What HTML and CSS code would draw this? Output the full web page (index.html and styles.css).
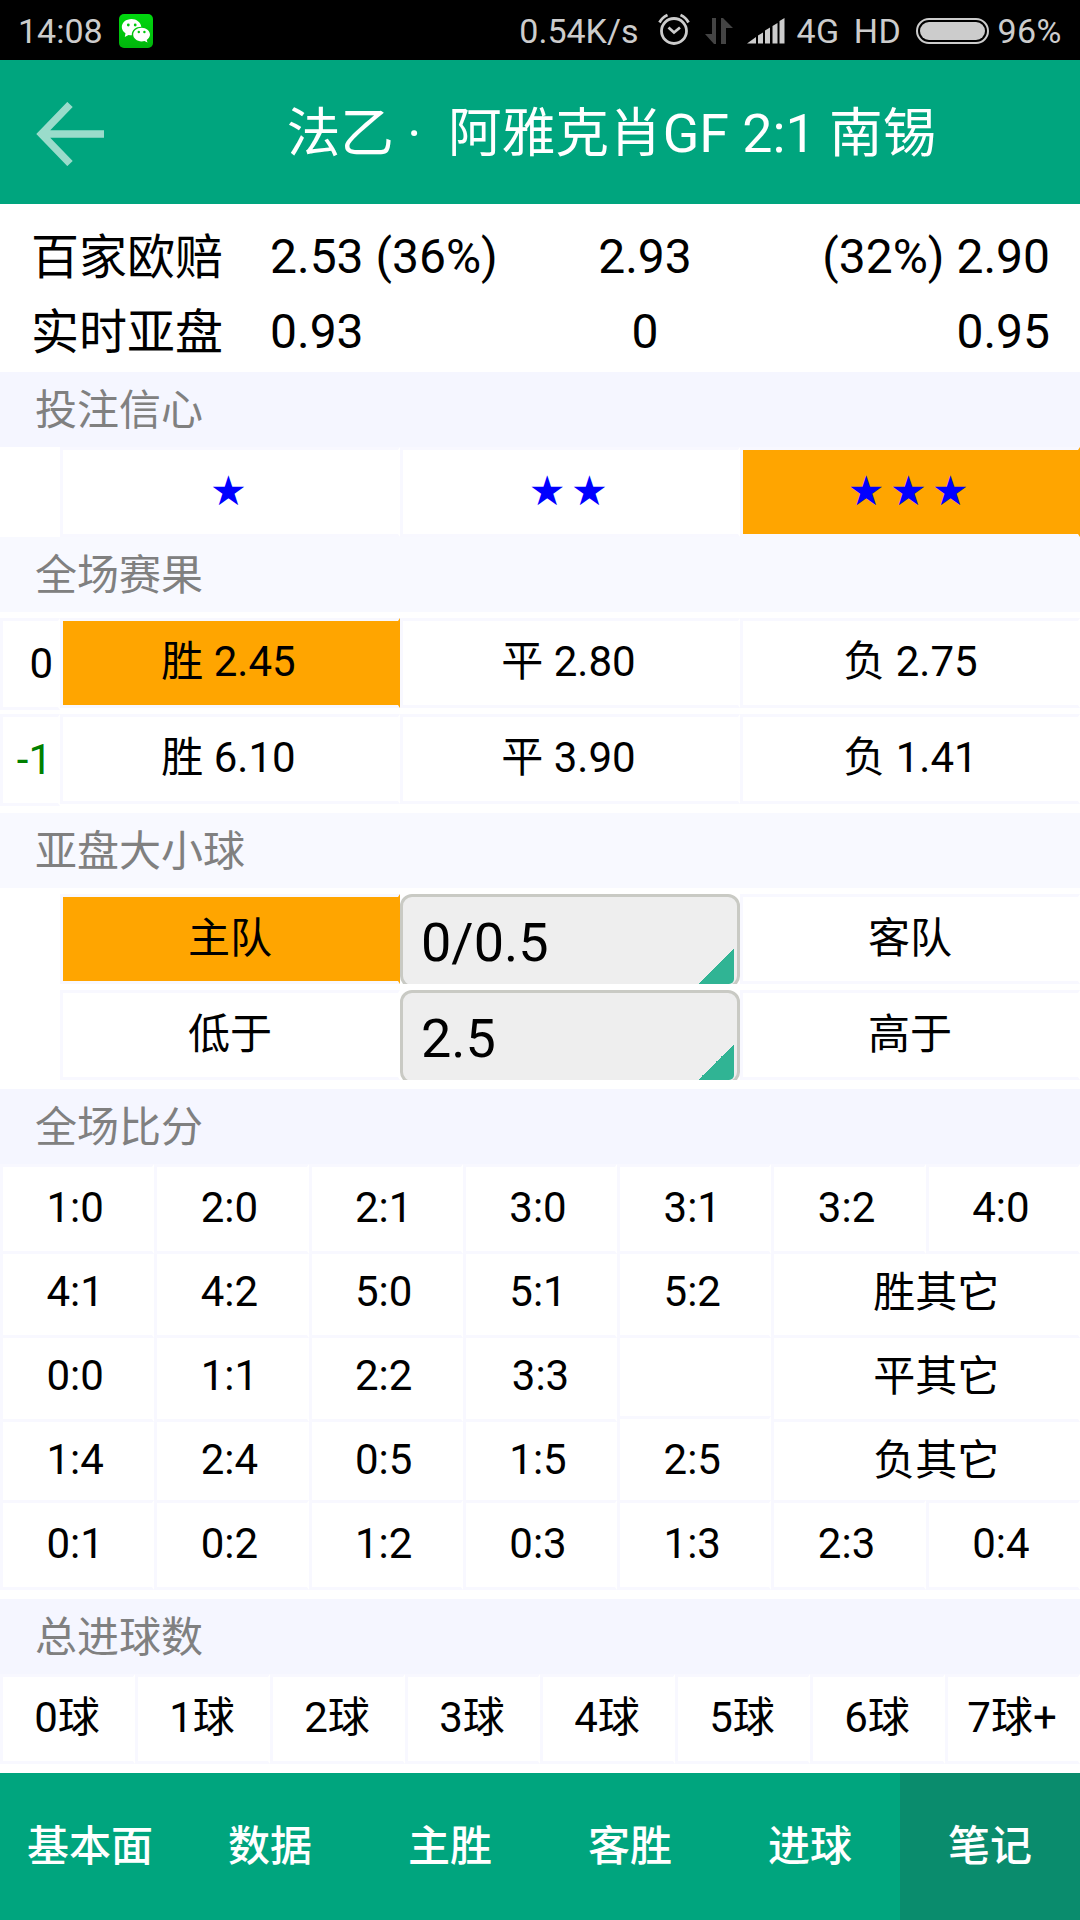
FILE: index.html
```html
<!DOCTYPE html>
<html lang="zh-CN">
<head>
	<meta charset="utf-8">
	<title>笔记</title>
	<link rel="stylesheet" href="styles.css">
</head>
<body>
	<div class="status">
		<span class="clock">14:08</span>
		<svg class="wechat" width="34" height="34" viewBox="0 0 34 34">
			<defs>
				<linearGradient id="wx" x1="0" y1="0" x2="0" y2="1">
					<stop offset="0" stop-color="#00d80e"/>
					<stop offset="1" stop-color="#00b60c"/>
				</linearGradient>
			</defs>
			<rect width="34" height="34" rx="5" fill="url(#wx)"/>
			<path d="M12.500 5C7 5 2.800 8.600 2.800 13c0 2.600 1.400 4.800 3.700 6.300L5.800 23l3.700-2.100c1.100.3 2.100.4 3.300.4C12.500 16 17 12.600 22.300 12.700 21.600 8.200 17.500 5 12.500 5z" fill="#fff"/>
			<path d="M22.600 13.700c-4.700 0-8.400 3-8.400 6.800s3.700 6.900 8.400 6.900c1 0 2-.2 2.900-.4l3 1.500-.8-2.600c2-1.300 3.300-3.200 3.300-5.400 0-3.800-3.800-6.800-8.400-6.800z" fill="#fff"/>
			<g fill="#00c80d">
				<circle cx="9.300" cy="11" r="1.400"/><circle cx="16.200" cy="11" r="1.400"/>
				<circle cx="19.800" cy="18" r="1.200"/><circle cx="25.400" cy="18" r="1.200"/>
			</g>
		</svg>
		<span class="speed">0.54K/s</span>
		<svg class="alarm" width="32" height="32" viewBox="0 0 32 32" fill="none" stroke="#ccc">
			<circle cx="16" cy="18" r="12.500" stroke-width="2.800"/>
			<path d="M10.500 14.500l5.500 5 6-5" stroke-width="2.800"/>
			<path d="M1.500 9.500Q4 4.500 9.500 2M30.500 9.500Q28 4.500 22.500 2" stroke-width="2.800"/>
		</svg>
		<svg class="updown" width="28" height="26" viewBox="0 0 28 26" fill="#444">
			<path d="M7 0h4v26H9L0 16h7zM16 0h2l10 10h-7v16h-5z"/>
		</svg>
		<svg class="signal" width="38" height="26" viewBox="0 0 38 26" fill="#ccc">
			<path d="M0 25.500L9 19v6.500zM11 17.500l5-3v11h-5zM18 12.500l5-3v16h-5zM25.500 8l5-3v20.500h-5zM32.500 3l5-3v25.500h-5z"/>
		</svg>
		<span class="net">4G</span>
		<span class="hd">HD</span>
		<span class="battery"></span>
		<span class="percent">96%</span>
	</div>

	<div class="header">
		<svg class="back" width="68" height="64" viewBox="0 0 68 64" fill="none" stroke="#9adccb" stroke-width="7.500">
			<path d="M34 2.500L5.500 32 34 61.500M6 32h62"/>
		</svg>
		<h1>法乙 ·&nbsp; 阿雅克肖GF 2:1 南锡</h1>
	</div>

	<div class="odds">
		<span class="name">百家欧赔</span><span>2.53 (36%)</span><span class="mid">2.93</span><span class="end">(32%) 2.90</span>
		<span class="name">实时亚盘</span><span>0.93</span><span class="mid">0</span><span class="end">0.95</span>
	</div>

	<h2 class="deep">投注信心</h2>
	<div class="row">
		<div class="head empty"></div>
		<div class="cell star">★</div>
		<div class="cell star">★★</div>
		<div class="cell star on">★★★</div>
	</div>

	<h2>全场赛果</h2>
	<div class="row gap">
		<div class="head">0</div>
		<div class="cell on">胜 2.45</div>
		<div class="cell">平 2.80</div>
		<div class="cell last">负 2.75</div>
	</div>
	<div class="row gap">
		<div class="head minus">-1</div>
		<div class="cell">胜 6.10</div>
		<div class="cell">平 3.90</div>
		<div class="cell last">负 1.41</div>
	</div>

	<h2 class="after">亚盘大小球</h2>
	<div class="row gap">
		<div class="head empty"></div>
		<div class="cell team on">主队</div>
		<div class="pick"><div class="select">0/0.5</div></div>
		<div class="cell team">客队</div>
	</div>
	<div class="row gap">
		<div class="head empty"></div>
		<div class="cell team">低于</div>
		<div class="pick"><div class="select">2.5</div></div>
		<div class="cell team">高于</div>
	</div>

	<h2 class="deep after">全场比分</h2>
	<div class="scores">
		<div class="cell r1">1:0</div><div class="cell r1">2:0</div><div class="cell r1">2:1</div><div class="cell r1">3:0</div><div class="cell r1">3:1</div><div class="cell r1">3:2</div><div class="cell r1">4:0</div>
		<div class="cell r2">4:1</div><div class="cell r2">4:2</div><div class="cell r2">5:0</div><div class="cell r2">5:1</div><div class="cell r2">5:2</div><div class="cell r2 wide">胜其它</div>
		<div class="cell r3">0:0</div><div class="cell r3">1:1</div><div class="cell r3">2:2</div><div class="cell r3 shift">3:3</div><div class="cell r0"></div><div class="cell r3 wide">平其它</div>
		<div class="cell r4">1:4</div><div class="cell r4">2:4</div><div class="cell r4">0:5</div><div class="cell r4">1:5</div><div class="cell r4">2:5</div><div class="cell r4 wide">负其它</div>
		<div class="cell r5">0:1</div><div class="cell r5">0:2</div><div class="cell r5">1:2</div><div class="cell r5">0:3</div><div class="cell r5">1:3</div><div class="cell r5">2:3</div><div class="cell r5">0:4</div>
	</div>

	<h2 class="deep after">总进球数</h2>
	<div class="goals">
		<div class="cell">0球</div><div class="cell">1球</div><div class="cell">2球</div><div class="cell">3球</div><div class="cell">4球</div><div class="cell">5球</div><div class="cell">6球</div><div class="cell">7球+</div>
	</div>

	<div class="nav">
		<a>基本面</a><a>数据</a><a>主胜</a><a>客胜</a><a>进球</a><a class="active">笔记</a>
	</div>
</body>
</html>
```
FILE: styles.css
```css
*
{
	box-sizing:border-box;
}
body
{
	margin:0;
	width:1080px;
	height:1920px;
	overflow:hidden;
	background:#fff;
	color:#000;
	font-family:Roboto,"Noto Sans CJK SC",sans-serif;
	font-size:42px;
}

/* 状态栏 */
.status
{
	display:flex;
	align-items:center;
	height:60px;
	padding:2px 18px 0 18px;
	background:#000;
	color:#ccc;
	font-size:34px;
	line-height:58px;
	white-space:nowrap;
}
.status svg
{
	flex:none;
}
.wechat
{
	margin-left:16px;
}
.speed
{
	margin-left:auto;
}
.alarm
{
	margin:0 15px 4px 19px;
}
.updown
{
	margin-right:14px;
}
.signal
{
	margin-right:12px;
}
.net
{
	margin-right:14px;
	letter-spacing:0.5px;
}
.hd
{
	letter-spacing:0.5px;
}
.battery
{
	width:73px;
	height:26px;
	margin:0 8px 0 15px;
	padding:2px;
	border:2px solid #ccc;
	border-radius:13px;
	background:#ccc content-box;
}
.percent
{
	letter-spacing:0.5px;
}

.header
{
	display:flex;
	align-items:center;
	height:144px;
	padding:4px 0 0 36px;
	background:#00a57e;
	color:#fff;
}
.header h1
{
	flex:1;
	margin:0;
	padding-left:39px;
	font-size:53.7px;
	font-weight:400;
	text-align:center;
	line-height:140px;
	white-space:nowrap;
}

.odds
{
	display:grid;
	grid-template-columns:240px 250px 250px 1fr;
	grid-auto-rows:75px;
	padding:15px 30px 3px;
	font-size:48px;
	line-height:75px;
	white-space:nowrap;
}
.name
{
	padding-left:1px;
	line-height:77px;
}
.mid
{
	text-align:center;
}
.end
{
	text-align:right;
}

h2
{
	height:75px;
	margin:0;
	padding-left:35px;
	background:#f8f9ff;
	color:gray;
	font-size:42px;
	font-weight:400;
	line-height:77px;
}
.deep
{
	background:#f5f6ff;
}
.after
{
	margin-top:9px;
}

.row
{
	display:grid;
	grid-template-columns:60px repeat(3,340px);
	height:90px;
}
.gap
{
	margin-top:6px;
}
.cell
{
	height:90px;
	border:3px solid #f8f8ff;
	border-right:2px solid #fff;
	background:#fff;
	line-height:81px;
	text-align:center;
	white-space:nowrap;
}
.row .cell
{
	padding-right:4px;
}
.row .last
{
	padding-right:0;
}
.row .team
{
	padding-right:1px;
	line-height:83px;
}
.on
{
	border-right-color:orange;
	background:orange;
	background-clip:padding-box;
}
.head
{
	border:3px solid #f8f8ff;
	border-right:2px solid #fff;
	padding-right:5px;
	line-height:86px;
	text-align:right;
}
.empty
{
	border-color:#fff;
}
.minus
{
	padding-right:6px;
	color:green;
}
.star
{
	color:blue;
	font-family:"DejaVu Sans",sans-serif;
	font-size:41px;
	letter-spacing:5.4px;
	text-indent:5px;
	line-height:82px;
}

/* 盘口下拉框 */
.pick
{
	height:90px;
	overflow:hidden;
}
.select
{
	position:relative;
	height:94px;
	padding-left:18px;
	border:3px solid #c9cac4;
	border-radius:12px;
	background:#eee;
	font-size:54px;
	line-height:91px;
}
.select:after
{
	content:"";
	position:absolute;
	right:3px;
	bottom:1px;
	width:36px;
	height:36px;
	border-radius:0 0 5px 0;
	background:linear-gradient(135deg,transparent 50%,#30b494 50%);
}

/* 每行重叠6px，r5压在最上面 */
.scores
{
	display:grid;
	grid-template-columns:repeat(7,1fr);
	grid-auto-rows:84px;
	height:426px;
}
.scores .cell
{
	padding-right:5px;
}
.scores .wide
{
	grid-column:span 2;
	padding-left:20px;
	padding-right:0;
	line-height:83px;
}
.scores .shift
{
	padding-right:0;
}
.r0 { z-index:0; }
.r1 { z-index:4; }
.r2 { z-index:3; }
.r3 { z-index:2; }
.r4 { z-index:1; }
.r5 { z-index:5; }

.goals
{
	display:grid;
	grid-template-columns:repeat(8,135px);
}
.goals .cell
{
	padding-right:2px;
}

.nav
{
	display:flex;
	height:147px;
	margin-top:9px;
	background:#00a57e;
	color:#fff;
	font-weight:500;
	line-height:148px;
	text-align:center;
}
.nav a
{
	width:180px;
	height:147px;
}
.active
{
	background:#0a8c6d;
}
```
